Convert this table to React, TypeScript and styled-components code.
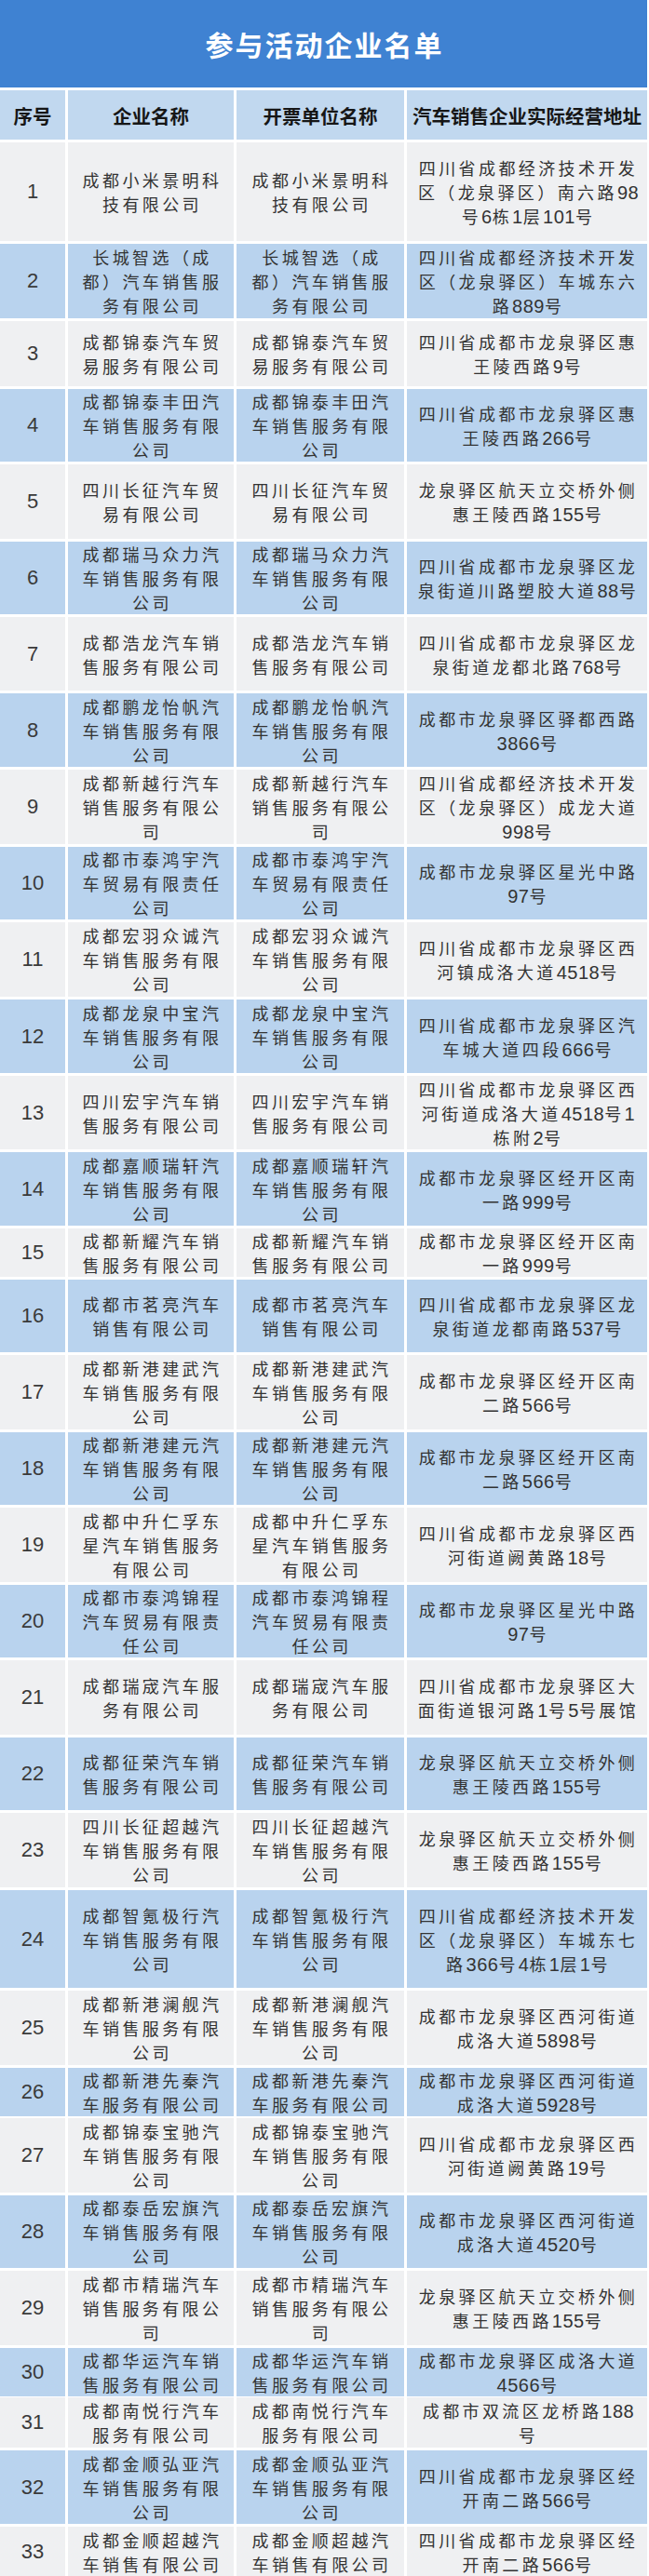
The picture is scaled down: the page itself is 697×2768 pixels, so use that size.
import styled, { createGlobalStyle } from "styled-components";

const GlobalStyle = createGlobalStyle`
  html, body {
    margin: 0;
    padding: 0;
    background: #ffffff;
  }
  body {
    font-family: "Noto Sans CJK SC", "Noto Sans", sans-serif;
  }
`;

// row heights measured off the sheet (the gap between rows is 3px)
const rows: { h: number; name: string; addr: string }[] = [
  { h: 106, name: "成都小米景明科\n技有限公司", addr: "四川省成都经济技术开发\n区（龙泉驿区）南六路98\n号6栋1层101号" },
  { h: 80, name: "长城智选（成\n都）汽车销售服\n务有限公司", addr: "四川省成都经济技术开发\n区（龙泉驿区）车城东六\n路889号" },
  { h: 70, name: "成都锦泰汽车贸\n易服务有限公司", addr: "四川省成都市龙泉驿区惠\n王陵西路9号" },
  { h: 78, name: "成都锦泰丰田汽\n车销售服务有限\n公司", addr: "四川省成都市龙泉驿区惠\n王陵西路266号" },
  { h: 80, name: "四川长征汽车贸\n易有限公司", addr: "龙泉驿区航天立交桥外侧\n惠王陵西路155号" },
  { h: 78, name: "成都瑞马众力汽\n车销售服务有限\n公司", addr: "四川省成都市龙泉驿区龙\n泉街道川路塑胶大道88号" },
  { h: 79, name: "成都浩龙汽车销\n售服务有限公司", addr: "四川省成都市龙泉驿区龙\n泉街道龙都北路768号" },
  { h: 79, name: "成都鹏龙怡帆汽\n车销售服务有限\n公司", addr: "成都市龙泉驿区驿都西路\n3866号" },
  { h: 80, name: "成都新越行汽车\n销售服务有限公\n司", addr: "四川省成都经济技术开发\n区（龙泉驿区）成龙大道\n998号" },
  { h: 78, name: "成都市泰鸿宇汽\n车贸易有限责任\n公司", addr: "成都市龙泉驿区星光中路\n97号" },
  { h: 80, name: "成都宏羽众诚汽\n车销售服务有限\n公司", addr: "四川省成都市龙泉驿区西\n河镇成洛大道4518号" },
  { h: 79, name: "成都龙泉中宝汽\n车销售服务有限\n公司", addr: "四川省成都市龙泉驿区汽\n车城大道四段666号" },
  { h: 79, name: "四川宏宇汽车销\n售服务有限公司", addr: "四川省成都市龙泉驿区西\n河街道成洛大道4518号1\n栋附2号" },
  { h: 79, name: "成都嘉顺瑞轩汽\n车销售服务有限\n公司", addr: "成都市龙泉驿区经开区南\n一路999号" },
  { h: 52, name: "成都新耀汽车销\n售服务有限公司", addr: "成都市龙泉驿区经开区南\n一路999号" },
  { h: 78, name: "成都市茗亮汽车\n销售有限公司", addr: "四川省成都市龙泉驿区龙\n泉街道龙都南路537号" },
  { h: 80, name: "成都新港建武汽\n车销售服务有限\n公司", addr: "成都市龙泉驿区经开区南\n二路566号" },
  { h: 78, name: "成都新港建元汽\n车销售服务有限\n公司", addr: "成都市龙泉驿区经开区南\n二路566号" },
  { h: 80, name: "成都中升仁孚东\n星汽车销售服务\n有限公司", addr: "四川省成都市龙泉驿区西\n河街道阙黄路18号" },
  { h: 78, name: "成都市泰鸿锦程\n汽车贸易有限责\n任公司", addr: "成都市龙泉驿区星光中路\n97号" },
  { h: 80, name: "成都瑞宬汽车服\n务有限公司", addr: "四川省成都市龙泉驿区大\n面街道银河路1号5号展馆" },
  { h: 78, name: "成都征荣汽车销\n售服务有限公司", addr: "龙泉驿区航天立交桥外侧\n惠王陵西路155号" },
  { h: 80, name: "四川长征超越汽\n车销售服务有限\n公司", addr: "龙泉驿区航天立交桥外侧\n惠王陵西路155号" },
  { h: 105, name: "成都智氪极行汽\n车销售服务有限\n公司", addr: "四川省成都经济技术开发\n区（龙泉驿区）车城东七\n路366号4栋1层1号" },
  { h: 80, name: "成都新港澜舰汽\n车销售服务有限\n公司", addr: "成都市龙泉驿区西河街道\n成洛大道5898号" },
  { h: 51, name: "成都新港先秦汽\n车服务有限公司", addr: "成都市龙泉驿区西河街道\n成洛大道5928号" },
  { h: 80, name: "成都锦泰宝驰汽\n车销售服务有限\n公司", addr: "四川省成都市龙泉驿区西\n河街道阙黄路19号" },
  { h: 78, name: "成都泰岳宏旗汽\n车销售服务有限\n公司", addr: "成都市龙泉驿区西河街道\n成洛大道4520号" },
  { h: 80, name: "成都市精瑞汽车\n销售服务有限公\n司", addr: "龙泉驿区航天立交桥外侧\n惠王陵西路155号" },
  { h: 50, name: "成都华运汽车销\n售服务有限公司", addr: "成都市龙泉驿区成洛大道\n4566号" },
  { h: 54, name: "成都南悦行汽车\n服务有限公司", addr: "成都市双流区龙桥路188\n号" },
  { h: 79, name: "成都金顺弘亚汽\n车销售服务有限\n公司", addr: "四川省成都市龙泉驿区经\n开南二路566号" },
  { h: 53, name: "成都金顺超越汽\n车销售有限公司", addr: "四川省成都市龙泉驿区经\n开南二路566号" },
];

const Sheet = styled.div`
  width: 695px;
  display: flex;
  flex-direction: column;
  gap: 3px;
  background: #ffffff;
`;

const TitleBar = styled.div`
  height: 94px;
  background: #3f82d2;
  color: #ffffff;
  display: flex;
  align-items: center;
  justify-content: center;
  font-size: 30px;
  font-weight: 700;
  letter-spacing: 2px;
  padding-left: 2px;
  box-sizing: border-box;
`;

const Row = styled.div<{ $h: number }>`
  display: grid;
  grid-template-columns: 70px 178px 180px 1fr;
  column-gap: 3px;
  height: ${(p) => p.$h}px;
`;

const Cell = styled.div<{ $blue?: boolean }>`
  display: flex;
  flex-direction: column;
  align-items: center;
  justify-content: center;
  text-align: center;
  white-space: nowrap;
  background: ${(p) => (p.$blue ? "#b9d3ee" : "#eff0f2")};
  color: #333333;
  font-size: 18px;
  line-height: 26px;
  letter-spacing: 3.4px;
  padding-left: 3px;
`;

const HeadCell = styled(Cell)`
  background: #c1d8ef;
  color: #161616;
  font-size: 20.5px;
  font-weight: 700;
  letter-spacing: 0;
  padding-left: 0;
`;

const NumCell = styled(Cell)`
  font-family: "Liberation Sans Narrow", "Liberation Sans", sans-serif;
  font-size: 22px;
  letter-spacing: 0;
  padding-left: 0;
  color: #3a3a3a;
`;

// a single text line inside a cell
const Line = styled.span`
  display: block;
  height: 26px;
`;

// digits in the sheet are set tight in a narrow face
const Digits = styled.span`
  font-family: "Liberation Sans Narrow", "Liberation Sans", sans-serif;
  font-size: 20px;
  line-height: 1;
  letter-spacing: 0.5px;
`;

const withDigits = (text: string) =>
  text.split(/(\d+)/).map((part, i) =>
    /^\d+$/.test(part) ? <Digits key={i}>{part}</Digits> : part
  );

const lines = (text: string, digits = false) =>
  text.split("\n").map((l, i) => (
    <Line key={i}>{digits ? withDigits(l) : l}</Line>
  ));

const App = () => {
  return (
    <>
      <GlobalStyle />
      <Sheet>
        <TitleBar>参与活动企业名单</TitleBar>
        <Row $h={53}>
          <HeadCell>序号</HeadCell>
          <HeadCell>企业名称</HeadCell>
          <HeadCell>开票单位名称</HeadCell>
          <HeadCell>汽车销售企业实际经营地址</HeadCell>
        </Row>
        {rows.map((r, i) => {
          const blue = i % 2 === 1;
          return (
            <Row key={i} $h={r.h}>
              <NumCell $blue={blue}>{i + 1}</NumCell>
              <Cell $blue={blue}>{lines(r.name)}</Cell>
              <Cell $blue={blue}>{lines(r.name)}</Cell>
              <Cell $blue={blue}>{lines(r.addr, true)}</Cell>
            </Row>
          );
        })}
      </Sheet>
    </>
  );
};

export default App;
